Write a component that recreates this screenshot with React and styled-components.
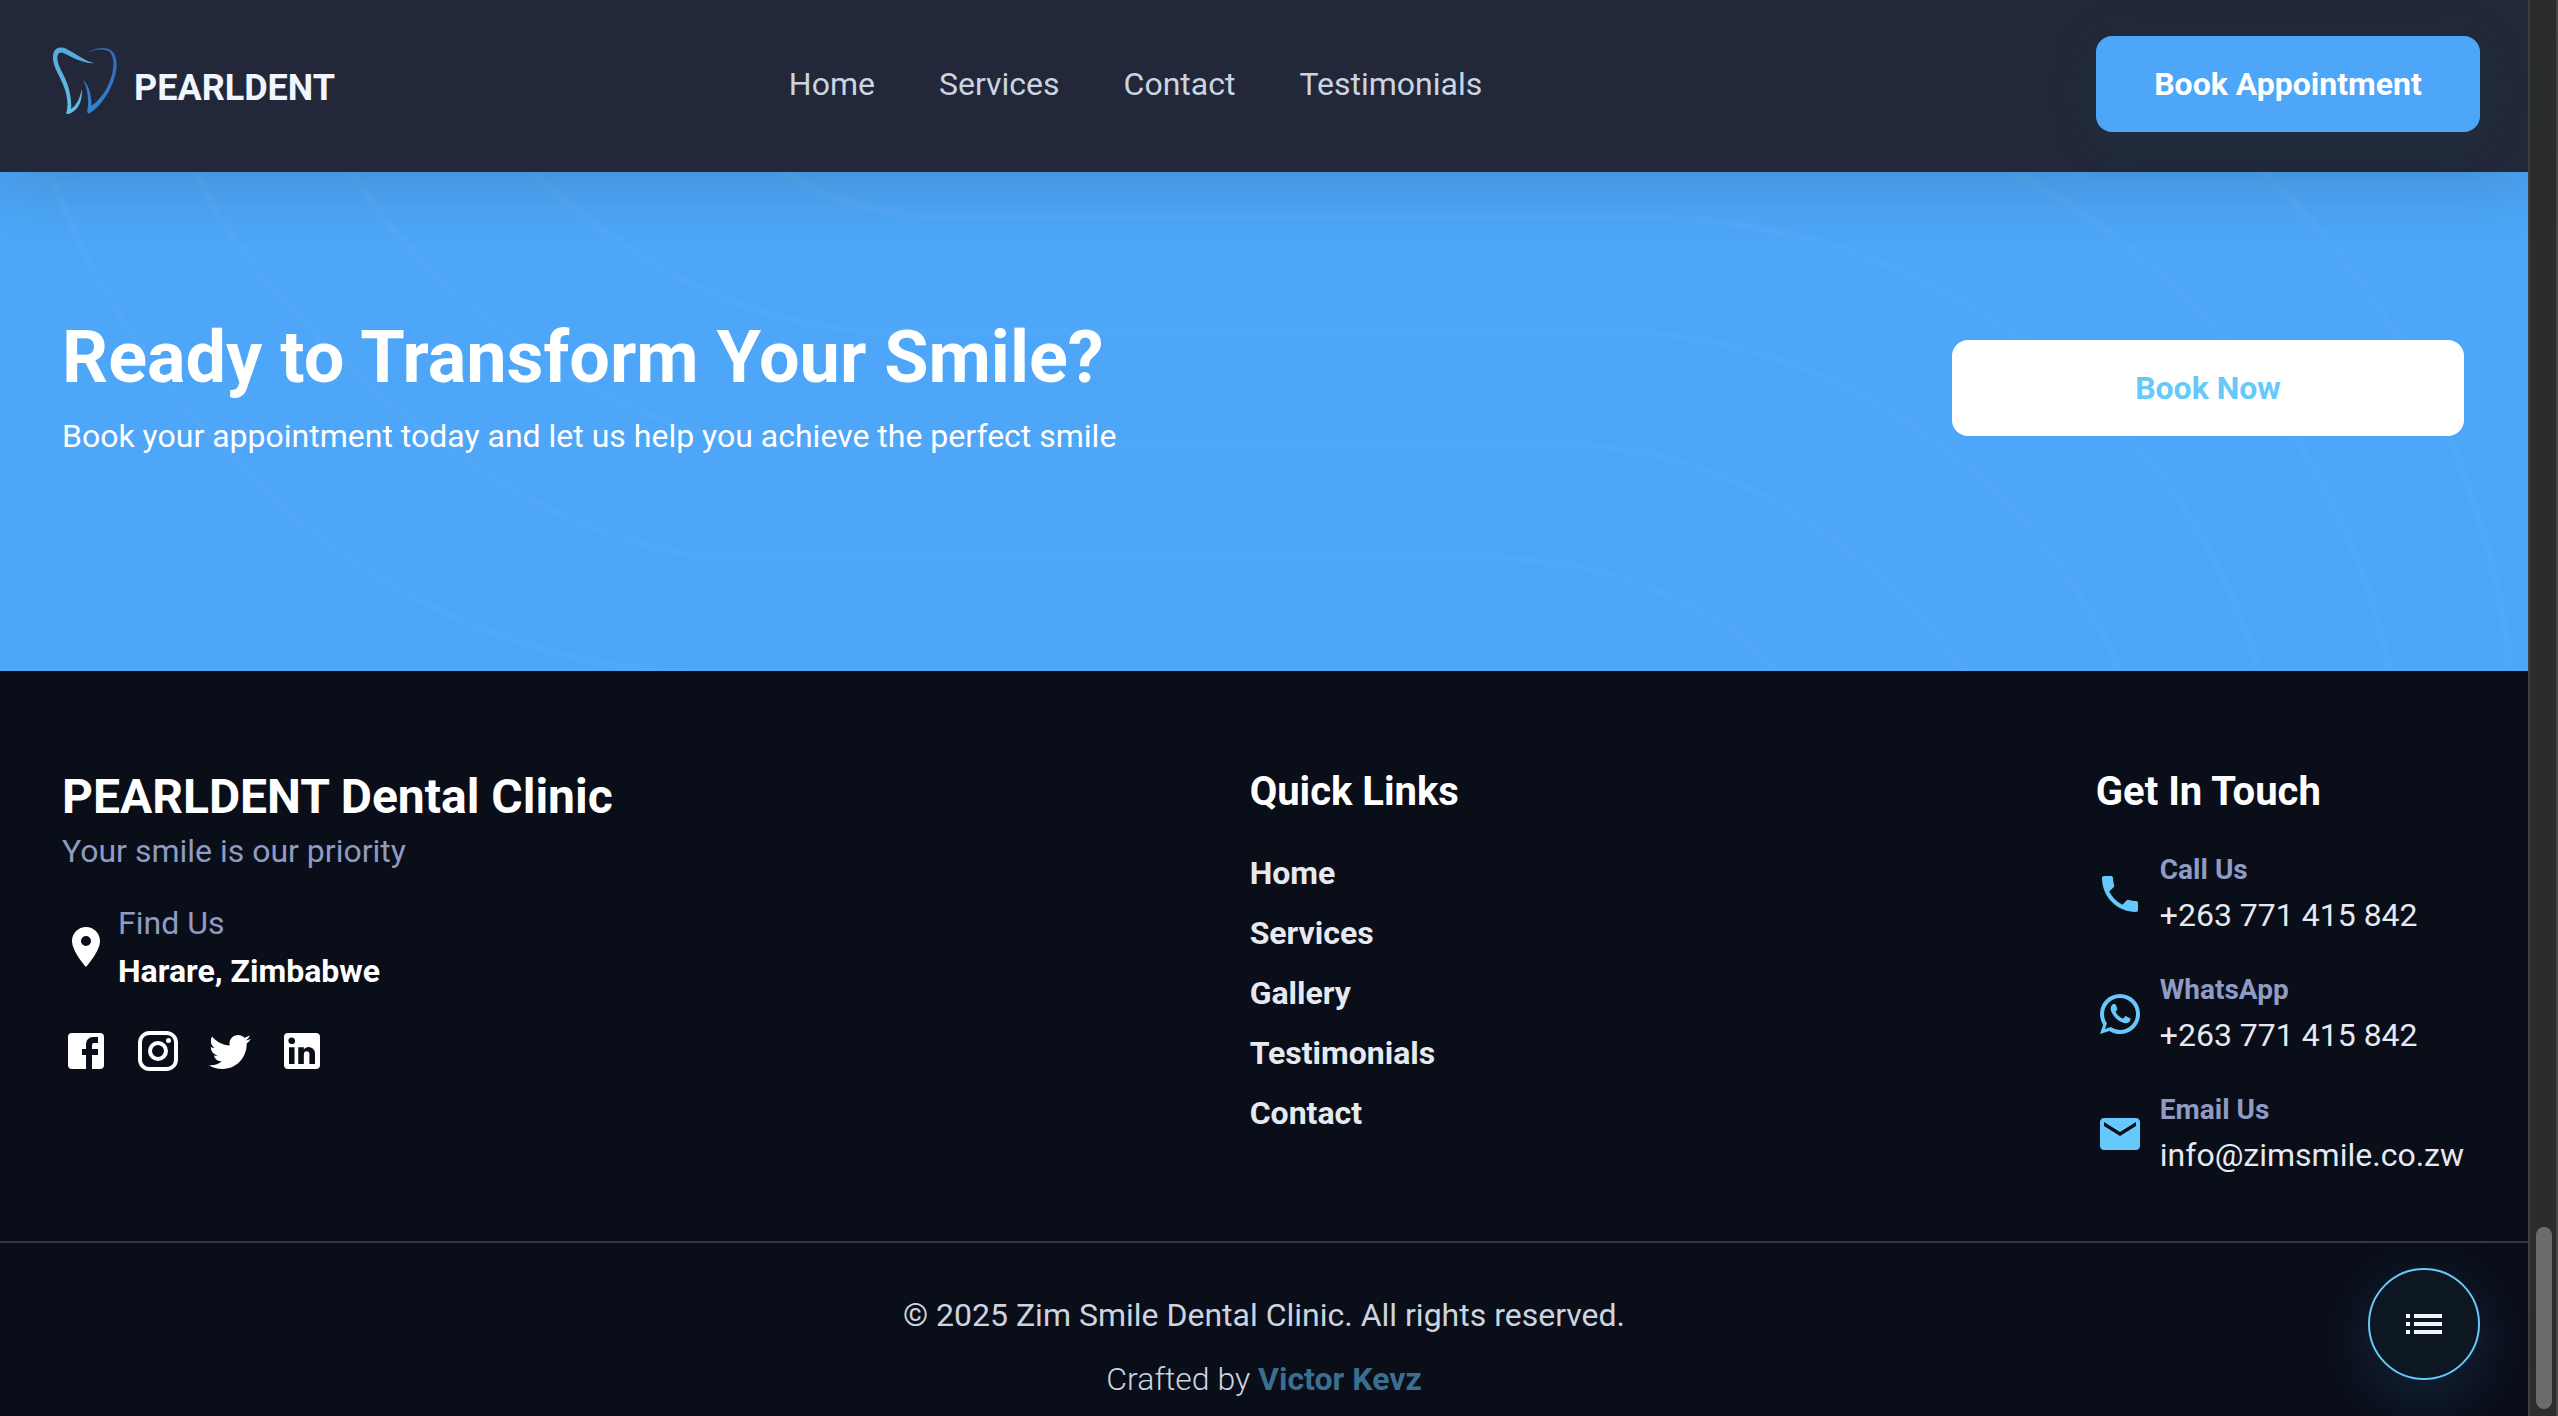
import React from "react";
import styled, { createGlobalStyle } from "styled-components";
import { MdLocationOn, MdLocalPhone, MdEmail, MdList } from "react-icons/md";

const color = {
  ink: "#0a0e19",
  bar: "#222839",
  blue: "#4da6f8",
  sky: "#66c9fb",
  muted: "#8f9bc2",
  soft: "#cbd5e1",
  bright: "#e6e9f0",
  white: "#ffffff",
};

const GlobalStyle = createGlobalStyle`
  * { box-sizing: border-box; }
  body {
    margin: 0;
    background: ${color.ink};
    font-family: Roboto, "Liberation Sans", sans-serif;
    font-size: 32px;
    line-height: 48px;
  }
  h2, h3, p, ul { margin: 0; padding: 0; }
  ul { list-style: none; }
  a { color: inherit; text-decoration: none; }
  button { font: inherit; border: 0; cursor: pointer; }
`;

const Shell = styled.div`
  display: grid;
  grid-template-columns: minmax(0, 1fr) 30px;
  min-height: 100vh;
`;

const Page = styled.div`
  display: flex;
  flex-direction: column;
`;

const ScrollTrack = styled.div`
  position: sticky;
  top: 0;
  height: 100vh;
  display: flex;
  flex-direction: column;
  justify-content: flex-end;
  align-items: center;
  padding-bottom: 7px;
  padding-left: 2px;
  background: #2c2c2c;
  border-left: 2px solid #3e3f44;
  border-right: 2px solid #464646;
`;

const ScrollThumb = styled.div`
  width: 16px;
  height: 182px;
  border-radius: 8px;
  background: #6b6b6b;
`;

const Header = styled.header`
  position: sticky;
  top: 0;
  z-index: 2;
  display: grid;
  grid-template-columns: 741fr auto 998fr;
  align-items: center;
  padding: 36px 48px 40px;
  background: ${color.bar};
  box-shadow: 0 8px 64px rgba(31, 50, 50, 0.22);
`;

const Brand = styled.a`
  display: flex;
  align-items: center;
  gap: 16px;
  padding-left: 4px;
  font-size: 36px;
  font-weight: 700;
  color: #f1f5fd;

  svg { margin-bottom: 6px; }
`;

const BrandName = styled.span`
  padding-top: 8px;
`;

const Nav = styled.nav`
  display: flex;
  gap: 64px;
  color: ${color.soft};
`;

const Button = styled.button`
  height: 96px;
  padding: 0 58px;
  border-radius: 16px;
  font-weight: 700;
  white-space: nowrap;
  color: ${(p) => (p.$light ? color.sky : color.white)};
  background: ${(p) => (p.$light ? color.white : color.blue)};
  min-width: ${(p) => (p.$light ? "512px" : "384px")};
  box-shadow: ${(p) => (p.$light ? "none" : "0 8px 40px rgba(20, 70, 80, 0.25)")};
  justify-self: end;
`;

const Cta = styled.section`
  position: relative;
  display: flex;
  justify-content: space-between;
  align-items: center;
  padding: 138px 64px 205px 62px;
  background: ${color.blue};
  color: ${color.white};
`;

const Waves = styled.svg`
  position: absolute;
  inset: 0;
  width: 100%;
  height: 100%;
`;

const CtaText = styled.div`
  position: relative;
  line-height: 60px;
`;

const CtaTitle = styled.h2`
  font-size: 72px;
  line-height: 96px;
  font-weight: 700;
`;

const CtaAction = styled.div`
  position: relative;
`;

const Footer = styled.footer`
  flex: 1;
  background: ${color.ink};
`;

const Columns = styled.div`
  display: flex;
  justify-content: space-between;
  padding: 96px 64px 62px 62px;
`;

const ClinicName = styled.h2`
  font-size: 48px;
  line-height: 60px;
  font-weight: 700;
  color: ${color.white};
`;

const Muted = styled.p`
  color: ${color.muted};
`;

const Address = styled.div`
  display: flex;
  align-items: center;
  gap: 8px;
  margin-top: 24px;
  color: ${color.white};
`;

const Strong = styled.p`
  font-weight: 700;
`;

const Socials = styled.div`
  display: flex;
  gap: 24px;
  margin-top: 32px;
  color: ${color.white};
`;

const IconLink = styled.a`
  display: flex;
`;

const ColumnTitle = styled.h3`
  font-size: 40px;
  line-height: 50px;
  font-weight: 700;
  color: ${color.white};
`;

const LinkList = styled.ul`
  margin-top: 26px;
  font-weight: 700;
  line-height: 60px;
  color: ${color.bright};
`;

const Contacts = styled.div`
  display: grid;
  gap: 30px;
  margin-top: 32px;
`;

const Contact = styled.a`
  display: flex;
  align-items: center;
  gap: 16px;
  color: ${color.sky};
`;

const ContactLabel = styled.p`
  font-size: 28px;
  line-height: 42px;
  font-weight: 700;
  color: ${color.muted};
`;

const ContactValue = styled.p`
  color: ${color.bright};
`;

const Legal = styled.div`
  padding-top: 40px;
  border-top: 2px solid #343843;
  line-height: 64px;
  text-align: center;
  color: ${color.soft};
`;

const Credit = styled.p`
  font-weight: 300;
  a { font-weight: 700; color: #3b6f8f; }
`;

const MenuButton = styled.button`
  position: fixed;
  right: 78px;
  bottom: 36px;
  z-index: 3;
  display: grid;
  place-items: center;
  width: 112px;
  height: 112px;
  border: 2px solid ${color.sky};
  border-radius: 50%;
  background: #0d1722;
  color: #f0f6fc;
  box-shadow: 0 16px 64px rgba(77, 166, 248, 0.16);
`;

const Glyph = ({ d }) => (
  <svg width="48" height="48" viewBox="0 0 24 24" fill="currentColor" aria-hidden="true">
    <path d={d} />
  </svg>
);

const facebook =
  "M5 3h14a2 2 0 0 1 2 2v14a2 2 0 0 1-2 2H5a2 2 0 0 1-2-2V5a2 2 0 0 1 2-2m13 2h-2.5A3.5 3.5 0 0 0 12 8.5V11h-2v3h2v7h3v-7h3v-3h-3V9a1 1 0 0 1 1-1h2V5z";
const instagram =
  "M7.8 2h8.4C19.4 2 22 4.6 22 7.8v8.4a5.8 5.8 0 0 1-5.8 5.8H7.8C4.6 22 2 19.4 2 16.2V7.8A5.8 5.8 0 0 1 7.8 2m-.2 2A3.6 3.6 0 0 0 4 7.6v8.8C4 18.39 5.61 20 7.6 20h8.8a3.6 3.6 0 0 0 3.6-3.6V7.6C20 5.61 18.39 4 16.4 4H7.6m9.65 1.5a1.25 1.25 0 0 1 1.25 1.25A1.25 1.25 0 0 1 17.25 8 1.25 1.25 0 0 1 16 6.75a1.25 1.25 0 0 1 1.25-1.25M12 7a5 5 0 0 1 5 5 5 5 0 0 1-5 5 5 5 0 0 1-5-5 5 5 0 0 1 5-5m0 2a3 3 0 0 0-3 3 3 3 0 0 0 3 3 3 3 0 0 0 3-3 3 3 0 0 0-3-3z";
const twitter =
  "M22.46 6c-.77.35-1.6.58-2.46.69.88-.53 1.56-1.37 1.88-2.38-.83.5-1.75.85-2.72 1.05C18.37 4.5 17.26 4 16 4c-2.35 0-4.27 1.92-4.27 4.29 0 .34.04.67.11.98C8.28 9.09 5.11 7.38 3 4.79c-.37.63-.58 1.37-.58 2.15 0 1.49.75 2.81 1.91 3.56-.71 0-1.37-.2-1.95-.5v.03c0 2.08 1.48 3.82 3.44 4.21a4.22 4.22 0 0 1-1.93.07 4.28 4.28 0 0 0 4 2.98 8.521 8.521 0 0 1-5.33 1.84c-.34 0-.68-.02-1.02-.06C3.44 20.29 5.7 21 8.12 21 16 21 20.33 14.46 20.33 8.79c0-.19 0-.37-.01-.56.84-.6 1.56-1.36 2.14-2.23z";
const linkedin =
  "M19 3a2 2 0 0 1 2 2v14a2 2 0 0 1-2 2H5a2 2 0 0 1-2-2V5a2 2 0 0 1 2-2h14m-.5 15.5v-5.3a3.26 3.26 0 0 0-3.26-3.26c-.85 0-1.84.52-2.32 1.3v-1.11h-2.79v8.37h2.79v-4.93c0-.77.62-1.4 1.39-1.4a1.4 1.4 0 0 1 1.4 1.4v4.93h2.79M6.88 8.56a1.68 1.68 0 0 0 1.68-1.68c0-.93-.75-1.69-1.68-1.69a1.69 1.69 0 0 0-1.69 1.69c0 .93.76 1.68 1.69 1.68m1.39 9.94v-8.37H5.5v8.37h2.77z";
const whatsapp =
  "M16.75 13.96c.25.13.41.2.46.3.06.11.04.61-.21 1.18-.2.56-1.24 1.1-1.7 1.12-.46.02-.47.36-2.96-.73-2.49-1.09-3.99-3.75-4.11-3.92-.12-.17-.96-1.38-.92-2.61.05-1.22.69-1.8.95-2.04.24-.26.51-.29.68-.26h.47c.15 0 .36-.06.55.45l.69 1.87c.06.13.1.28.01.44l-.27.41-.39.42c-.12.12-.26.25-.12.5.12.26.62 1.09 1.32 1.78.91.88 1.71 1.17 1.95 1.3.24.14.39.12.54-.04l.81-.94c.19-.25.35-.19.58-.11l1.67.88M12 2a10 10 0 0 1 10 10 10 10 0 0 1-10 10c-1.97 0-3.8-.57-5.35-1.55L2 22l1.55-4.65A9.969 9.969 0 0 1 2 12 10 10 0 0 1 12 2m0 2a8 8 0 0 0-8 8c0 1.72.54 3.31 1.46 4.61L4.5 19.5l2.89-.96A7.95 7.95 0 0 0 12 20a8 8 0 0 0 8-8 8 8 0 0 0-8-8z";

const ToothLogo = () => (
  <svg width="66" height="68" viewBox="156 142 198 204" aria-hidden="true">
    <defs>
      <linearGradient id="toothLeft" x1="0" y1="0" x2="0" y2="1">
        <stop offset="0" stopColor="#55a9dc" />
        <stop offset="1" stopColor="#62bfe4" />
      </linearGradient>
      <linearGradient id="toothRight" x1="0" y1="0" x2="0" y2="1">
        <stop offset="0" stopColor="#3566b4" />
        <stop offset="1" stopColor="#2f86d0" />
      </linearGradient>
    </defs>
    <path
      fill="url(#toothLeft)"
      d="M283 191C250 192 215 172 190 160C172 153 168 172 176 195C186 222 206 245 212 295C214 310 214 322 213 328C226 320 240 300 245 268C249 300 236 330 213 340C205 344 195 344 200 336C208 300 195 265 180 235C165 205 158 190 159 170C160 145 178 138 200 148C225 160 250 182 283 191Z"
    />
    <path
      fill="url(#toothRight)"
      d="M263 158C285 143 325 138 340 158C355 180 352 215 338 250C325 285 300 320 270 340C262 345 260 338 264 320C266 295 262 262 248 240C264 252 273 275 275 318C300 300 322 270 333 235C343 205 343 175 330 158C315 145 285 148 263 158Z"
    />
  </svg>
);

const contours = [
  "M38 -40L51 3C125 205 350 501 720 501",
  "M176 -40L198 3C240 112 500 386 740 386H1490C1600 386 1720 430 1782 504",
  "M336 -40L355 3C400 90 600 274 800 274H1590C1740 280 1890 390 1968 504",
  "M508 -30L535 3C600 60 720 160 900 160H1620C1860 165 2050 330 2122 504",
  "M764 -12L788 3C830 30 890 45 955 45H1640C1930 45 2185 235 2260 504",
  "M1968 -25L2018 3C2180 85 2350 280 2390 504",
  "M2234 -25L2266 3C2390 120 2490 295 2511 504",
];

const navItems = ["Home", "Services", "Contact", "Testimonials"];
const quickLinks = ["Home", "Services", "Gallery", "Testimonials", "Contact"];
const socials = [
  ["Facebook", facebook],
  ["Instagram", instagram],
  ["Twitter", twitter],
  ["LinkedIn", linkedin],
];
const contacts = [
  { label: "Call Us", value: "+263 771 415 842", href: "tel:+263771415842", icon: <MdLocalPhone size={48} /> },
  { label: "WhatsApp", value: "+263 771 415 842", href: "#whatsapp", icon: <Glyph d={whatsapp} /> },
  { label: "Email Us", value: "info@zimsmile.co.zw", href: "mailto:info@zimsmile.co.zw", icon: <MdEmail size={48} /> },
];

export default function App() {
  return (
    <>
      <GlobalStyle />
      <Shell>
        <Page>
          <Header>
            <Brand href="#top">
              <ToothLogo />
              <BrandName>PEARLDENT</BrandName>
            </Brand>
            <Nav>
              {navItems.map((n) => (
                <a key={n} href={`#${n.toLowerCase()}`}>{n}</a>
              ))}
            </Nav>
            <Button type="button">Book Appointment</Button>
          </Header>

          <Cta>
            <Waves viewBox="0 0 2528 499" preserveAspectRatio="none" aria-hidden="true">
              {contours.map((d) => (
                <path key={d} d={d} fill="none" stroke="#ffffff" strokeOpacity="0.03" strokeWidth="7" />
              ))}
            </Waves>
            <CtaText>
              <CtaTitle>Ready to Transform Your Smile?</CtaTitle>
              <p>Book your appointment today and let us help you achieve the perfect smile</p>
            </CtaText>
            <CtaAction>
              <Button type="button" $light>Book Now</Button>
            </CtaAction>
          </Cta>

          <Footer>
            <Columns>
              <div>
                <ClinicName>PEARLDENT Dental Clinic</ClinicName>
                <Muted>Your smile is our priority</Muted>
                <Address>
                  <MdLocationOn size={48} />
                  <div>
                    <Muted>Find Us</Muted>
                    <Strong>Harare, Zimbabwe</Strong>
                  </div>
                </Address>
                <Socials>
                  {socials.map(([name, d]) => (
                    <IconLink key={name} href={`#${name.toLowerCase()}`} aria-label={name}>
                      <Glyph d={d} />
                    </IconLink>
                  ))}
                </Socials>
              </div>
              <div>
                <ColumnTitle>Quick Links</ColumnTitle>
                <LinkList>
                  {quickLinks.map((l) => (
                    <li key={l}><a href={`#${l.toLowerCase()}`}>{l}</a></li>
                  ))}
                </LinkList>
              </div>
              <div>
                <ColumnTitle>Get In Touch</ColumnTitle>
                <Contacts>
                  {contacts.map((c) => (
                    <Contact key={c.label} href={c.href}>
                      {c.icon}
                      <div>
                        <ContactLabel>{c.label}</ContactLabel>
                        <ContactValue>{c.value}</ContactValue>
                      </div>
                    </Contact>
                  ))}
                </Contacts>
              </div>
            </Columns>
            <Legal>
              <p>© 2025 Zim Smile Dental Clinic. All rights reserved.</p>
              <Credit>Crafted by <a href="#author">Victor Kevz</a></Credit>
            </Legal>
          </Footer>
        </Page>
        <ScrollTrack aria-hidden="true">
          <ScrollThumb />
        </ScrollTrack>
      </Shell>
      <MenuButton type="button" aria-label="Open menu">
        <MdList size={48} />
      </MenuButton>
    </>
  );
}
